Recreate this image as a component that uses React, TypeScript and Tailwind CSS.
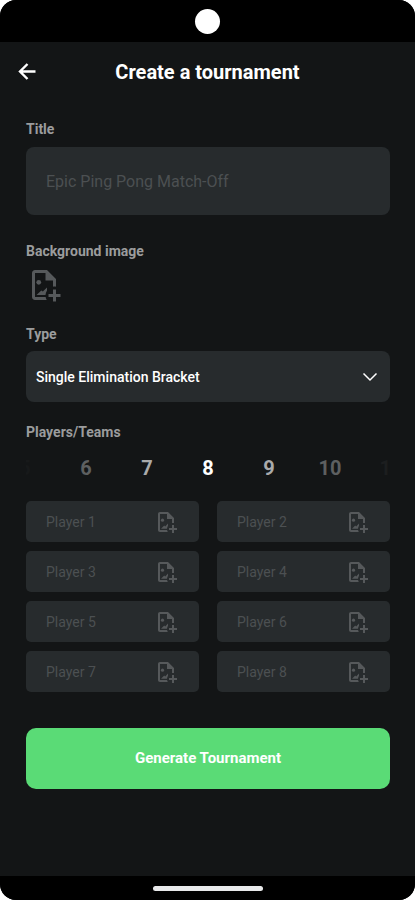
import React, { useState } from "react";

function ImagePlusIcon({ className }: { className: string }) {
  return (
    <svg viewBox="0 0 24 24" fill="currentColor" className={className} aria-hidden="true">
      <path d="M13.81 22H6C4.89 22 4 21.11 4 20V4C4 2.9 4.89 2 6 2H14L20 8V13.09C19.67 13.04 19.34 13 19 13S18.33 13.04 18 13.09V9H13V4H6V20H13.09C13.21 20.72 13.46 21.39 13.81 22Z" />
      <circle cx="8.5" cy="10.2" r="1.6" />
      <path d="M7 18.7L10.2 15.6L11.2 16.4L14 13.6V15.7C13.4 16.6 13.1 17.6 13 18.7H7Z" />
      <path d="M18 15V18H15V20H18V23H20V20H23V18H20V15H18Z" />
    </svg>
  );
}

const labelClass = "block text-sm leading-5 font-bold text-[#9b9c9d]";

const counts = [
  { value: 5, tone: "text-[#17191a]" },
  { value: 6, tone: "text-[#5d5f60]" },
  { value: 7, tone: "text-[#a9aaab]" },
  { value: 8, tone: "text-white" },
  { value: 9, tone: "text-[#a9aaab]" },
  { value: 10, tone: "text-[#5d5f60]" },
  { value: 11, tone: "text-[#1c1e1f]" },
];

function PlayerField({ number }: { number: number }) {
  return (
    <div className="flex h-[41px] items-center rounded-[5px] bg-[#272b2d] pr-[21px] pl-5">
      <input
        aria-label={`Player ${number}`}
        placeholder={`Player ${number}`}
        className="min-w-0 flex-1 bg-transparent text-sm text-white outline-none placeholder:text-[#4c5052]"
      />
      <button type="button" aria-label={`Add image for player ${number}`} className="text-[#56595b]">
        <ImagePlusIcon className="size-6" />
      </button>
    </div>
  );
}

export default function App() {
  const [type, setType] = useState("single");
  return (
    <div className="min-h-screen bg-white font-[Roboto,sans-serif]">
      <div className="flex min-h-screen flex-col overflow-hidden rounded-2xl bg-[#131516]">
        <div className="flex h-[42px] items-center justify-center bg-black">
          <div className="size-[25px] rounded-full bg-white" />
        </div>

        <header className="grid h-[60px] grid-cols-[40px_1fr_40px] items-center px-[7px]">
          <button type="button" aria-label="Back" className="flex justify-center text-white">
            <svg
              viewBox="0 0 24 24"
              fill="none"
              stroke="currentColor"
              strokeWidth="2.4"
              className="size-6"
              aria-hidden="true"
            >
              <path d="M20.5 11.5H6M12.5 4L5 11.5L12.5 19" />
            </svg>
          </button>
          <h1 className="text-center text-xl font-bold text-white">Create a tournament</h1>
        </header>

        <main className="flex flex-1 flex-col pt-[17px] pr-[25px] pl-[26px]">
          <label htmlFor="title" className={labelClass}>Title</label>
          <input
            id="title"
            placeholder="Epic Ping Pong Match-Off"
            className="mt-2 h-[68px] w-full rounded-lg bg-[#272b2d] px-5 text-base text-white outline-none placeholder:text-[#4c5052]"
          />

          <span className={`${labelClass} mt-[26px]`}>Background image</span>
          <button type="button" aria-label="Add background image" className="mt-[6px] self-start text-[#56595b]">
            <ImagePlusIcon className="size-9" />
          </button>

          <label htmlFor="type" className={`${labelClass} mt-[21px]`}>Type</label>
          <div className="mt-[7px] grid items-center rounded-lg bg-[#272b2d]">
            <select
              id="type"
              value={type}
              onChange={(e) => setType(e.target.value)}
              className="col-start-1 row-start-1 h-[51px] w-full appearance-none bg-transparent px-[10px] text-sm font-medium text-white outline-none"
            >
              <option value="single">Single Elimination Bracket</option>
              <option value="double">Double Elimination Bracket</option>
            </select>
            <svg
              viewBox="0 0 16 16"
              fill="none"
              stroke="white"
              strokeWidth="1.5"
              className="pointer-events-none col-start-1 row-start-1 mr-3 size-4 justify-self-end"
              aria-hidden="true"
            >
              <path d="M1.5 4.5L8 11L14.5 4.5" />
            </svg>
          </div>

          <span className={`${labelClass} mt-5`}>Players/Teams</span>
          <div className="mt-3 flex justify-center overflow-hidden">
            {counts.map(({ value, tone }) => (
              <button
                key={value}
                type="button"
                className={`w-[61px] shrink-0 text-center text-xl leading-7 font-bold ${tone}`}
              >
                {value}
              </button>
            ))}
          </div>

          <div className="mt-[19px] grid grid-cols-2 gap-x-[18px] gap-y-[9px]">
            {[1, 2, 3, 4, 5, 6, 7, 8].map((n) => (
              <PlayerField key={n} number={n} />
            ))}
          </div>

          <button
            type="button"
            className="mt-9 h-[61px] w-full rounded-[10px] bg-[#5adb76] text-[15px] font-bold text-white"
          >
            Generate Tournament
          </button>
        </main>

        <div className="flex h-6 items-center justify-center bg-black">
          <div className="h-[5px] w-[110px] rounded-sm bg-[#e8e9ea]" />
        </div>
      </div>
    </div>
  );
}
